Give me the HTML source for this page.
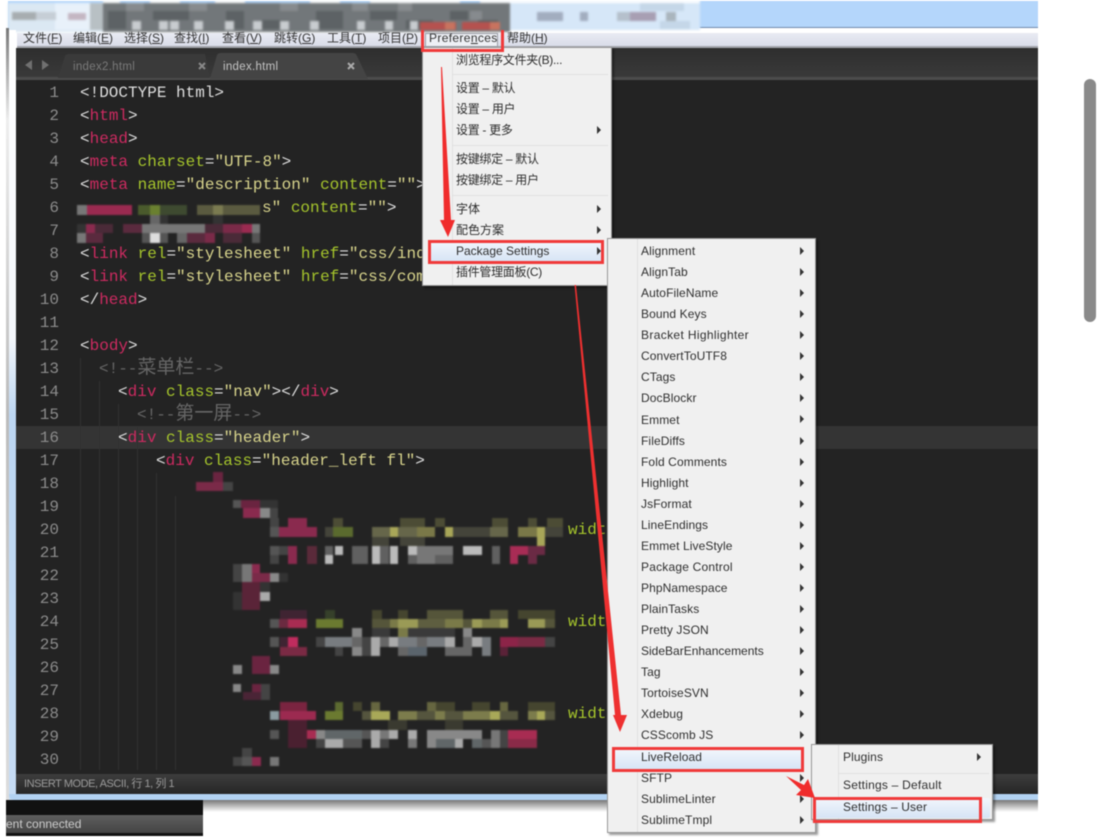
<!DOCTYPE html>
<html>
<head>
<meta charset="utf-8">
<style>
html,body{margin:0;padding:0;background:#fff}
#p{position:relative;width:1098px;height:840px;overflow:hidden;background:#fff;font-family:"Liberation Sans","Noto Sans CJK SC",sans-serif;filter:blur(.4px)}
#p div,#p span.a{position:absolute}
.m{top:30px;height:16px;line-height:16px;font-size:12px;color:#333;white-space:nowrap}
.n{right:1039px;width:40px;text-align:right;font:16px/23px "Liberation Mono",monospace;color:#8b8b8b;margin-top:1px}
.l{left:80px;height:23px;font:16px/23px "Liberation Mono","Noto Sans CJK SC",monospace;color:#ddd;white-space:pre;margin-top:1px}
.t{color:#cc2a60}.k{color:#a5c42c}.s{color:#d8d48c}.c{color:#666}
.c b{font-weight:normal;font-size:19px;line-height:20px}
.menu{background:#f0f0f0;border:1px solid #979797;box-shadow:2px 2px 2px rgba(0,0,0,.4);box-sizing:border-box}
.i{height:20px;line-height:20px;font-size:12px;color:#2e2e2e;white-space:nowrap;letter-spacing:.1px}
.z{letter-spacing:0}
.y{letter-spacing:-.3px}
.ar{width:0;height:0;border-left:4px solid #333;border-top:4px solid transparent;border-bottom:4px solid transparent}
.sep{height:1px;background:#e0e0e0}
.red{border:3px solid #f03a3a;box-sizing:border-box}
.g{width:1px;background:#e0e0e0}
.hl{background:linear-gradient(#f2f6fc,#d6e4f5);border-radius:2px}
</style>
</head>
<body>
<div id="p">

<!-- title band -->
<div style="left:8px;top:1px;width:1030px;height:27px;background:#b4d6fb"></div>
<div style="left:700px;top:27px;width:338px;height:1px;background:#6f8aac"></div>
<div style="left:8px;top:28px;width:1030px;height:5px;background:#fff"></div>
<svg class="tb" width="1098" height="34" style="position:absolute;left:0;top:0;filter:blur(1px)">
<path fill="#dbe8f3" d="M8 3h95v29H8z"/>
<path fill="#e8f1fa" d="M55 3h35v27H55z"/>
<path fill="#a7adb0" d="M12 12h24v8H12z"/>
<path fill="#c6ced6" d="M36 12h20v8H36z"/>
<path fill="#c4b6c2" d="M68 13h18v7H68z"/>
<path fill="#b8c0c4" d="M90 3h13v27H90z"/>
<path fill="#72777a" d="M103 3h407v29H103z"/>
<path fill="#5d6265" d="M108 11h18v18h-18zM153 11h36v9h-36zM226 11h18v18h-18zM262 20h27v9h-27zM316 11h27v18h-27zM370 11h27v9h-27zM406 20h27v9h-27zM450 11h18v9h-18zM478 20h20v9h-20z"/>
<path fill="#878b8e" d="M126 3h18v8h-18zM189 3h18v8h-18zM280 3h18v8h-18zM352 3h16v8h-16zM398 3h14v8h-14zM470 11h12v9h-12z"/>
<path fill="#fff" d="M103 0h17v3h-17zM150 0h30v3h-30zM215 0h30v3h-30zM310 0h30v3h-30zM370 0h90v3h-90zM480 0h30v3h-30z"/>
<path fill="#c8cccf" d="M132 21h9v9h-9zM159 21h9v9h-9zM170 21h9v9h-9zM225 21h9v9h-9zM253 21h9v9h-9zM280 21h9v9h-9zM310 21h9v9h-9zM194 21h9v9h-9zM357 21h8v9h-8zM385 21h8v9h-8zM410 21h8v9h-8z"/>
<path fill="#b5524f" d="M420 22h36v8h-36zM462 22h38v8h-38z"/>
<path fill="#c8735f" d="M445 22h10v8h-10zM490 22h10v8h-10z"/>
<path fill="#d6e7f8" d="M510 3h190v27H510z"/>
<path fill="#fff" d="M510 0h190v3H510z"/>
<path fill="#a2adbf" d="M537 12h26v9h-26zM580 12h8v9h-8z"/>
<path fill="#b5c0cc" d="M617 12h17v9h-17z"/>
<path fill="#a89fb3" d="M630 12h26v9h-26z"/>
<path fill="#aab5bd" d="M666 12h10v9h-10z"/>
<path fill="#c5d7e8" d="M640 3h44v8h-44zM660 21h30v8h-30z"/>
</svg>

<!-- menu bar -->
<div style="left:17px;top:33px;width:1021px;height:14px;background:linear-gradient(#e9ebf3,#d8dbe8)"></div>
<div style="left:17px;top:46px;width:1021px;height:2px;background:#a3a5ab"></div>
<div class="m" style="left:23px">文件(<u>F</u>)</div>
<div class="m" style="left:73px">编辑(<u>E</u>)</div>
<div class="m" style="left:124px">选择(<u>S</u>)</div>
<div class="m" style="left:174px">查找(<u>I</u>)</div>
<div class="m" style="left:222px">查看(<u>V</u>)</div>
<div class="m" style="left:274px">跳转(<u>G</u>)</div>
<div class="m" style="left:327px">工具(<u>T</u>)</div>
<div class="m" style="left:378px">项目(<u>P</u>)</div>
<div style="left:425px;top:33px;width:73px;height:14px;background:#eef0f5;border:1px solid #9a9ca5;box-sizing:border-box"></div>
<div class="m" style="left:429px;letter-spacing:.35px">Prefere<u>n</u>ces</div>
<div class="m" style="left:507px">帮助(<u>H</u>)</div>

<!-- left window frame -->
<div style="left:6px;top:28px;width:3px;height:772px;background:linear-gradient(#777,#eee 12%,#bbb 50%,#ddd)"></div>
<div style="left:9px;top:30px;width:7px;height:770px;background:linear-gradient(#fff,#f4f7fb 40%,#bcd6f2 50%,#c6dcf4)"></div>

<!-- tab bar -->
<div style="left:16px;top:48px;width:1022px;height:32px;background:linear-gradient(#2e2e2e,#3b3b3b)"></div>
<div style="left:16px;top:77px;width:1022px;height:3px;background:#4c4c4c"></div>
<svg width="380" height="40" style="position:absolute;left:0;top:46px">
<path fill="#777" d="M25 19l7-5v10zM49 19l-7-5v10z" opacity=".9"/>
<path fill="#3a3a3a" d="M58 32l7-22q1-2 4-2h136l5 24z"/>
<path fill="#444" d="M210 33l7-24q1-2 4-2h132q3 0 4 3l11 23z"/>
<path stroke="#888" stroke-width="2" d="M199 17l6 6m0-6l-6 6"/>
<path stroke="#aaa" stroke-width="2" d="M348 17l6 6m0-6l-6 6"/>
</svg>
<div style="left:73px;top:59px;font-size:11.500px;line-height:16px;color:#7a7a7a;letter-spacing:.3px">index2.html</div>
<div style="left:223px;top:59px;font-size:11.500px;line-height:16px;color:#c4c4c4;letter-spacing:.3px">index.html</div>

<!-- editor -->
<div style="left:16px;top:80px;width:1022px;height:694px;background:#232323"></div>
<div style="left:16px;top:426px;width:1022px;height:23px;background:#343434"></div>
<svg width="300" height="440" style="position:absolute;left:0;top:334px">
<path stroke="#303030" d="M80.500 24V436M99.500 47V436M118.500 70V436M137.500 93V436M156.500 139V436M175.500 162V436"/>
</svg>

<div class="n" style="top:81px">1</div>
<div class="n" style="top:104px">2</div>
<div class="n" style="top:127px">3</div>
<div class="n" style="top:150px">4</div>
<div class="n" style="top:173px">5</div>
<div class="n" style="top:196px">6</div>
<div class="n" style="top:219px">7</div>
<div class="n" style="top:242px">8</div>
<div class="n" style="top:265px">9</div>
<div class="n" style="top:288px">10</div>
<div class="n" style="top:311px">11</div>
<div class="n" style="top:334px">12</div>
<div class="n" style="top:357px">13</div>
<div class="n" style="top:380px">14</div>
<div class="n" style="top:403px">15</div>
<div class="n" style="top:426px">16</div>
<div class="n" style="top:449px">17</div>
<div class="n" style="top:472px">18</div>
<div class="n" style="top:495px">19</div>
<div class="n" style="top:518px">20</div>
<div class="n" style="top:541px">21</div>
<div class="n" style="top:564px">22</div>
<div class="n" style="top:587px">23</div>
<div class="n" style="top:610px">24</div>
<div class="n" style="top:633px">25</div>
<div class="n" style="top:656px">26</div>
<div class="n" style="top:679px">27</div>
<div class="n" style="top:702px">28</div>
<div class="n" style="top:725px">29</div>
<div class="n" style="top:748px">30</div>

<div class="l" style="top:81px">&lt;!DOCTYPE html&gt;</div>
<div class="l" style="top:104px">&lt;<span class="t">html</span>&gt;</div>
<div class="l" style="top:127px">&lt;<span class="t">head</span>&gt;</div>
<div class="l" style="top:150px">&lt;<span class="t">meta</span> <span class="k">charset</span>=<span class="s">"UTF-8"</span>&gt;</div>
<div class="l" style="top:173px">&lt;<span class="t">meta</span> <span class="k">name</span>=<span class="s">"description"</span> <span class="k">content</span>=<span class="s">""</span>&gt;</div>
<div class="l" style="top:196px;left:262px"><span class="s">s"</span> <span class="k">content</span>=<span class="s">""</span>&gt;</div>
<div class="l" style="top:242px">&lt;<span class="t">link</span> <span class="k">rel</span>=<span class="s">"stylesheet"</span> <span class="k">href</span>=<span class="s">"css/index.css"</span>&gt;</div>
<div class="l" style="top:265px">&lt;<span class="t">link</span> <span class="k">rel</span>=<span class="s">"stylesheet"</span> <span class="k">href</span>=<span class="s">"css/common.css"</span>&gt;</div>
<div class="l" style="top:288px">&lt;/<span class="t">head</span>&gt;</div>
<div class="l" style="top:334px">&lt;<span class="t">body</span>&gt;</div>
<div class="l c" style="top:357px;left:99px">&lt;!--<b>菜单栏</b>--&gt;</div>
<div class="l" style="top:380px;left:118px">&lt;<span class="t">div</span> <span class="k">class</span>=<span class="s">"nav"</span>&gt;&lt;/<span class="t">div</span>&gt;</div>
<div class="l c" style="top:403px;left:137px">&lt;!--<b>第一屏</b>--&gt;</div>
<div class="l" style="top:426px;left:118px">&lt;<span class="t">div</span> <span class="k">class</span>=<span class="s">"header"</span>&gt;</div>
<div class="l" style="top:449px;left:156px">&lt;<span class="t">div</span> <span class="k">class</span>=<span class="s">"header_left fl"</span>&gt;</div>
<div class="l k" style="top:518px;left:568px">width</div>
<div class="l k" style="top:610px;left:568px">width</div>
<div class="l k" style="top:702px;left:568px">width</div>

<!-- pixelated code -->
<svg width="600" height="780" style="position:absolute;left:0;top:0;filter:blur(.7px)">
<!-- line 6/7 -->
<path fill="#777" d="M77 205h10v10H77zM77 233h9v10h-9zM142 224h8v9h-8zM150 224h10v9h-10zM187 224h18v9h-18zM252 224h8v9h-8zM160 224h27v9h-27z"/>
<path fill="#9a2a50" d="M87 205h45v10H87zM242 224h10v9h-10z"/>
<path fill="#4a5a2c" d="M138 205h12v10h-12z"/>
<path fill="#6a8030" d="M150 205h10v10h-10z"/>
<path fill="#3e4a30" d="M160 205h27v10h-27z"/>
<path fill="#5a5a40" d="M197 205h63v10h-63z"/>
<path fill="#7a7a50" d="M213 205h10v10h-10z"/>
<path fill="#666" d="M150 215h10v9h-10zM177 233h10v10h-10z"/>
<path fill="#333" d="M77 224h9v9h-9zM160 215h8v9h-8zM213 215h10v9h-10z"/>
<path fill="#8a2a4e" d="M86 224h9v9h-9z"/>
<path fill="#4a2a38" d="M95 224h18v9H95zM205 224h18v9h-18zM223 233h19v10h-19z"/>
<path fill="#5a2a3e" d="M123 224h19v9h-19zM86 233h17v10H86zM187 233h18v10h-18z"/>
<path fill="#7a2a48" d="M223 224h19v9h-19zM205 233h10v10h-10z"/>
<path fill="#ddd" d="M150 233h10v10h-10z"/>
<path fill="#555" d="M160 233h8v10h-8zM142 233h8v10h-8zM252 233h8v10h-8z"/>
<!-- line 18-23 -->
<path fill="#6a2440" d="M213 472h10v10h-10zM241 500h19v8h-19z"/>
<path fill="#7a2a48" d="M196 482h27v9h-27zM252 573h18v9h-18z"/>
<path fill="#444" d="M223 482h10v9h-10zM270 508h8v10h-8zM270 518h9v9h-9zM270 555h9v9h-9zM279 546h9v9h-9zM233 564h9v18h-9z"/>
<path fill="#555" d="M233 500h8v8h-8zM270 527h9v10h-9zM270 546h9v9h-9z"/>
<path fill="#333" d="M260 500h18v8h-18zM279 573h9v9h-9zM260 582h10v10h-10zM233 592h9v18h-9z"/>
<path fill="#8a2a4e" d="M243 508h17v10h-17zM288 518h19v9h-19zM279 527h38v10h-38zM288 546h9v18h-9zM252 564h8v9h-8z"/>
<path fill="#888" d="M260 508h10v10h-10zM270 573h9v9h-9z"/>
<path fill="#777" d="M242 564h10v18h-10z"/>
<path fill="#5a2438" d="M242 582h18v28h-18z"/>
<path fill="#aaa" d="M260 592h10v9h-10z"/>
<!-- line 20 -->
<path fill="#4c4c35" d="M333 518h10v9h-10zM400 518h25v9h-25zM492 518h16v9h-16zM528 518h9v9h-9zM435 518h10v9h-10zM547 518h16v9h-16z"/>
<path fill="#5a6a2e" d="M333 527h20v10h-20z"/>
<path fill="#66664a" d="M372 527h18v10h-18zM398 527h19v10h-19zM490 527h18v10h-18z"/>
<path fill="#7a7848" d="M417 527h18v10h-18zM518 527h19v10h-19z"/>
<path fill="#a8a658" d="M390 527h8v10h-8zM445 527h8v10h-8zM537 527h8v10h-8zM537 537h8v9h-8z"/>
<path fill="#44443a" d="M453 527h37v10h-37zM545 527h18v10h-18zM372 537h17v9h-17zM400 537h25v9h-25zM325 527h8v10h-8z"/>
<!-- line 21 -->
<path fill="#5a2a3a" d="M307 546h10v18h-10z"/>
<path fill="#bbb" d="M335 546h8v9h-8zM372 546h8v18h-8zM390 546h8v18h-8zM408 546h9v9h-9zM463 546h19v9h-19zM325 555h8v9h-8z"/>
<path fill="#777" d="M417 546h28v9h-28zM445 546h8v9h-8zM417 555h18v9h-18z"/>
<path fill="#606060" d="M325 546h8v9h-8zM352 546h16v18h-16zM380 546h9v18h-9zM408 555h9v9h-9zM435 555h18v9h-18zM492 546h8v18h-8z"/>
<path fill="#a82c55" d="M510 546h18v9h-18zM510 555h8v9h-8z"/>
<path fill="#6a2a44" d="M528 546h17v9h-17zM528 555h9v9h-9z"/>
<!-- line 24 -->
<path fill="#3f2432" d="M280 610h27v9h-27zM280 637h8v10h-8z"/>
<path fill="#36402a" d="M325 610h10v9h-10z"/>
<path fill="#55553a" d="M427 610h36v9h-36zM490 610h18v9h-18zM372 619h18v9h-18zM463 619h9v9h-9zM545 619h10v9h-10z"/>
<path fill="#45452f" d="M518 610h37v9h-37zM372 610h10v9h-10zM398 610h10v9h-10z"/>
<path fill="#555" d="M270 619h9v9h-9zM270 637h9v10h-9z"/>
<path fill="#6b2a40" d="M279 619h9v9h-9z"/>
<path fill="#a82c52" d="M288 619h19v9h-19z"/>
<path fill="#6b7a30" d="M316 619h27v9h-27z"/>
<path fill="#7a7a48" d="M390 619h8v9h-8zM445 619h18v9h-18zM482 619h18v9h-18zM398 628h10v9h-10z"/>
<path fill="#9a9a56" d="M398 619h10v9h-10zM408 619h10v9h-10zM472 619h10v9h-10zM500 619h8v9h-8zM528 619h17v9h-17z"/>
<path fill="#5e5e40" d="M418 619h27v9h-27z"/>
<path fill="#888" d="M352 628h10v9h-10zM463 628h9v9h-9zM352 647h10v9h-10z"/>
<path fill="#3a3a3a" d="M372 628h18v9h-18zM408 628h47v9h-47z"/>
<!-- line 25 -->
<path fill="#c02c5e" d="M288 637h10v10h-10z"/>
<path fill="#787c80" d="M325 637h27v10h-27zM427 637h18v10h-18zM398 637h19v10h-19zM482 637h9v19h-9z"/>
<path fill="#666" d="M352 637h10v10h-10zM380 637h9v10h-9zM417 637h10v10h-10zM463 637h9v10h-9zM398 647h10v9h-10zM445 647h27v9h-27z"/>
<path fill="#aaa" d="M371 637h9v19h-9zM389 637h9v10h-9zM445 637h10v10h-10zM472 637h10v10h-10z"/>
<path fill="#444" d="M316 637h9v10h-9zM335 647h8v9h-8zM362 637h9v19h-9zM545 637h10v10h-10z"/>
<path fill="#8c2448" d="M500 637h18v10h-18z"/>
<path fill="#7a2a44" d="M518 637h27v10h-27zM280 647h27v9h-27z"/>
<path fill="#5a646c" d="M408 647h19v9h-19z"/>
<path fill="#5a2238" d="M500 647h8v9h-8z"/>
<!-- line 26-27 -->
<path fill="#6a2440" d="M252 656h18v18h-18zM252 684h9v8h-9z"/>
<path fill="#888" d="M233 665h9v9h-9zM270 665h9v9h-9zM233 684h8v8h-8z"/>
<path fill="#4a2436" d="M243 692h18v8h-18z"/>
<path fill="#444" d="M261 684h9v16h-9z"/>
<!-- line 28 -->
<path fill="#7a2440" d="M280 702h27v9h-27z"/>
<path fill="#5c6a30" d="M335 702h8v9h-8z"/>
<path fill="#666640" d="M427 702h9v9h-9zM371 702h9v9h-9zM500 702h8v9h-8z"/>
<path fill="#45452f" d="M353 702h9v9h-9zM436 702h19v9h-19zM472 702h18v9h-18zM528 702h27v9h-27z"/>
<path fill="#8a9aa0" d="M270 711h9v9h-9z"/>
<path fill="#9c2a50" d="M280 711h36v9h-36z"/>
<path fill="#6b7a30" d="M325 711h18v9h-18z"/>
<path fill="#a8a858" d="M371 711h19v9h-19zM490 711h10v9h-10zM537 711h8v9h-8z"/>
<path fill="#7c7c4c" d="M398 711h19v9h-19zM435 711h10v9h-10zM463 711h27v9h-27zM528 711h9v9h-9z"/>
<path fill="#55553e" d="M362 711h9v9h-9zM417 711h18v9h-18zM445 711h18v9h-18zM500 711h18v9h-18zM545 711h10v9h-10z"/>
<path fill="#4a2030" d="M288 720h19v28h-19z"/>
<path fill="#3a3a30" d="M388 720h19v10h-19zM445 720h18v10h-18z"/>
<!-- line 29 -->
<path fill="#555" d="M270 730h9v9h-9zM362 730h9v9h-9zM343 739h19v9h-19zM482 739h9v9h-9z"/>
<path fill="#a82c52" d="M307 730h9v9h-9zM508 730h29v9h-29z"/>
<path fill="#888" d="M316 730h9v9h-9zM427 730h55v9h-55zM427 739h9v9h-9z"/>
<path fill="#606668" d="M325 730h37v9h-37zM390 730h8v9h-8zM436 739h19v9h-19zM472 739h10v9h-10z"/>
<path fill="#aaa" d="M371 730h9v18h-9zM389 730h9v9h-9zM408 730h9v9h-9zM325 739h18v9h-18zM455 739h8v9h-8z"/>
<path fill="#777" d="M380 730h9v9h-9zM491 730h9v18h-9zM408 739h9v9h-9z"/>
<path fill="#444" d="M316 739h9v9h-9zM380 739h9v9h-9zM500 730h8v18h-8z"/>
<path fill="#8a2a48" d="M508 739h29v9h-29z"/>
<!-- line 30 -->
<path fill="#444" d="M242 748h10v9h-10zM233 757h9v9h-9z"/>
<path fill="#555" d="M242 757h10v9h-10z"/>
<path fill="#8a2a4e" d="M252 757h9v9h-9z"/>
<path fill="#777" d="M270 757h9v9h-9z"/>
</svg>

<!-- status bar -->
<div style="left:16px;top:774px;width:1022px;height:20px;background:linear-gradient(#3d3d3d,#262626)"></div>
<div style="left:24px;top:776px;font-size:11px;line-height:16px;color:#9a9a9a;white-space:nowrap;letter-spacing:-.45px">INSERT MODE, ASCII, 行 1, 列 1</div>
<div style="left:9px;top:794px;width:1029px;height:6px;background:#b2d2f2;border-radius:0 0 0 5px"></div>
<div style="left:203px;top:800px;width:835px;height:12px;background:linear-gradient(#777,#fff)"></div>

<!-- bottom-left dark box -->
<div style="left:6px;top:800px;width:197px;height:36px;background:#111"></div>
<div style="left:6px;top:815px;width:197px;height:18px;background:linear-gradient(#5e5e5e,#444)"></div>
<div style="left:6px;top:816px;font-size:12px;line-height:16px;color:#ccc;white-space:nowrap">ent connected</div>

<!-- scrollbar -->
<div style="left:1084px;top:79px;width:12px;height:243px;background:#8a8a8a;border-radius:6px"></div>

<!-- preferences menu -->
<div class="menu" style="left:422px;top:47px;width:190px;height:239px"></div>
<div class="g" style="left:452px;top:48px;height:237px"></div>
<div class="sep" style="left:453px;top:74px;width:155px"></div>
<div class="sep" style="left:453px;top:145px;width:155px"></div>
<div class="sep" style="left:453px;top:195px;width:155px"></div>
<div class="hl" style="left:429px;top:241px;width:174px;height:21px"></div>
<div class="i y" style="left:456px;top:50px">浏览程序文件夹(B)...</div>
<div class="i y" style="left:456px;top:78px">设置 – 默认</div>
<div class="i y" style="left:456px;top:99px">设置 – 用户</div>
<div class="i y" style="left:456px;top:120px">设置 - 更多</div>
<div class="i y" style="left:456px;top:149px">按键绑定 – 默认</div>
<div class="i y" style="left:456px;top:170px">按键绑定 – 用户</div>
<div class="i z" style="left:456px;top:199px">字体</div>
<div class="i z" style="left:456px;top:220px">配色方案</div>
<div class="i z" style="left:456px;top:241px">Package Settings</div>
<div class="i y" style="left:456px;top:262px">插件管理面板(C)</div>
<div class="ar" style="left:597px;top:126px"></div>
<div class="ar" style="left:597px;top:205px"></div>
<div class="ar" style="left:597px;top:226px"></div>
<div class="ar" style="left:597px;top:247px"></div>
<div class="red" style="left:428px;top:240px;width:176px;height:24px"></div>
<div style="left:421px;top:30px;width:3px;height:22px;background:#f03a3a"></div>
<div style="left:501px;top:30px;width:3px;height:22px;background:#f03a3a"></div>
<div style="left:421px;top:49px;width:83px;height:3px;background:#f03a3a"></div>

<!-- packages submenu -->
<div class="menu" style="left:607px;top:238px;width:209px;height:595px"></div>
<div class="g" style="left:637px;top:239px;height:593px"></div>
<div class="hl" style="left:614px;top:749px;width:188px;height:21px"></div>
<div class="i" style="left:641px;top:241px">Alignment</div>
<div class="i" style="left:641px;top:262px">AlignTab</div>
<div class="i" style="left:641px;top:283px">AutoFileName</div>
<div class="i" style="left:641px;top:304px">Bound Keys</div>
<div class="i" style="left:641px;top:325px;letter-spacing:.35px">Bracket Highlighter</div>
<div class="i" style="left:641px;top:346px">ConvertToUTF8</div>
<div class="i" style="left:641px;top:367px">CTags</div>
<div class="i" style="left:641px;top:388px">DocBlockr</div>
<div class="i" style="left:641px;top:410px">Emmet</div>
<div class="i" style="left:641px;top:431px">FileDiffs</div>
<div class="i" style="left:641px;top:452px">Fold Comments</div>
<div class="i" style="left:641px;top:473px">Highlight</div>
<div class="i" style="left:641px;top:494px">JsFormat</div>
<div class="i" style="left:641px;top:515px">LineEndings</div>
<div class="i" style="left:641px;top:536px">Emmet LiveStyle</div>
<div class="i" style="left:641px;top:557px;letter-spacing:.2px">Package Control</div>
<div class="i" style="left:641px;top:578px">PhpNamespace</div>
<div class="i" style="left:641px;top:599px">PlainTasks</div>
<div class="i" style="left:641px;top:620px">Pretty JSON</div>
<div class="i z" style="left:641px;top:641px">SideBarEnhancements</div>
<div class="i" style="left:641px;top:662px">Tag</div>
<div class="i" style="left:641px;top:683px">TortoiseSVN</div>
<div class="i" style="left:641px;top:704px">Xdebug</div>
<div class="i" style="left:641px;top:725px">CSScomb JS</div>
<div class="i" style="left:641px;top:747px">LiveReload</div>
<div class="i" style="left:641px;top:768px">SFTP</div>
<div class="i" style="left:641px;top:789px">SublimeLinter</div>
<div class="i" style="left:641px;top:810px">SublimeTmpl</div>
<div class="ar" style="left:800px;top:247px"></div>
<div class="ar" style="left:800px;top:268px"></div>
<div class="ar" style="left:800px;top:289px"></div>
<div class="ar" style="left:800px;top:310px"></div>
<div class="ar" style="left:800px;top:331px"></div>
<div class="ar" style="left:800px;top:352px"></div>
<div class="ar" style="left:800px;top:373px"></div>
<div class="ar" style="left:800px;top:394px"></div>
<div class="ar" style="left:800px;top:415px"></div>
<div class="ar" style="left:800px;top:437px"></div>
<div class="ar" style="left:800px;top:458px"></div>
<div class="ar" style="left:800px;top:479px"></div>
<div class="ar" style="left:800px;top:500px"></div>
<div class="ar" style="left:800px;top:521px"></div>
<div class="ar" style="left:800px;top:542px"></div>
<div class="ar" style="left:800px;top:563px"></div>
<div class="ar" style="left:800px;top:584px"></div>
<div class="ar" style="left:800px;top:605px"></div>
<div class="ar" style="left:800px;top:626px"></div>
<div class="ar" style="left:800px;top:647px"></div>
<div class="ar" style="left:800px;top:668px"></div>
<div class="ar" style="left:800px;top:689px"></div>
<div class="ar" style="left:800px;top:710px"></div>
<div class="ar" style="left:800px;top:731px"></div>
<div class="ar" style="left:800px;top:774px"></div>
<div class="ar" style="left:800px;top:795px"></div>
<div class="ar" style="left:800px;top:816px"></div>
<div class="red" style="left:612px;top:747px;width:192px;height:25px"></div>

<!-- livereload submenu -->
<div class="menu" style="left:811px;top:744px;width:182px;height:76px"></div>
<div class="g" style="left:838px;top:745px;height:74px"></div>
<div class="sep" style="left:839px;top:773px;width:150px"></div>
<div class="hl" style="left:815px;top:798px;width:175px;height:20px"></div>
<div class="i" style="left:843px;top:747px">Plugins</div>
<div class="i" style="left:843px;top:775px;letter-spacing:.22px">Settings – Default</div>
<div class="i" style="left:843px;top:797px;letter-spacing:.14px">Settings – User</div>
<div class="ar" style="left:977px;top:753px"></div>
<div class="red" style="left:813px;top:797px;width:169px;height:26px"></div>

<!-- red arrows -->
<svg width="1098" height="840" style="position:absolute;left:0;top:0;pointer-events:none">
<path fill="#f02c2c" d="M441 67h1l9 153h4l-7 17-8-17h4z"/>
<path fill="#ee3030" d="M574.500 285h1.500l45 430h6l-7 17-7-17h2z"/>
<path fill="#f02c2c" d="M786 776l18 9 4-6 7 19-19-3 5-5z"/>
</svg>

</div>
</body>
</html>
